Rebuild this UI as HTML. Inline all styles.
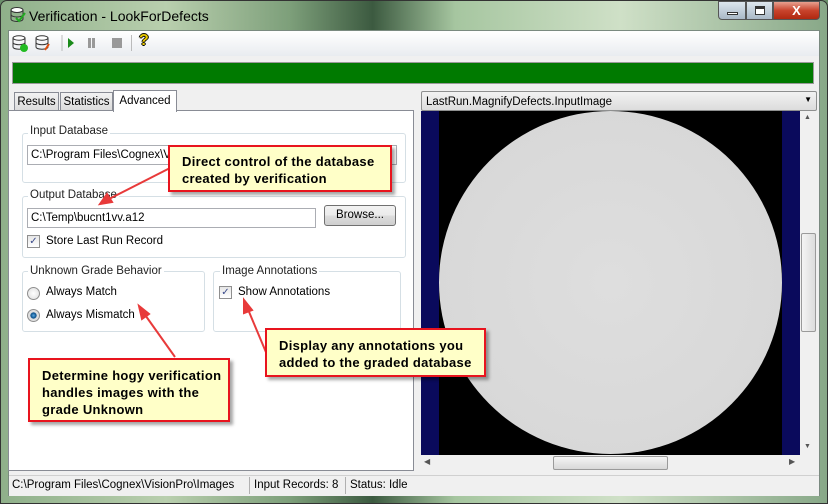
<!DOCTYPE html>
<html><head><meta charset="utf-8"><style>
*{box-sizing:border-box;margin:0;padding:0}
body{width:828px;height:504px;overflow:hidden;font-family:"Liberation Sans",sans-serif;font-size:11.5px;color:#000;position:relative;background:#6a8f6a}
.a{position:absolute}
.frame{left:0;top:0;width:828px;height:504px;background:linear-gradient(90deg,#8fb08a 0%,#b9cfae 20%,#7d9f7a 35%,#3c5a40 45%,#a6c6a0 55%,#cfe0c7 75%,#88a888 100%);border-radius:7px 7px 0 0;border:1px solid #333}
.client{left:8px;top:30px;width:812px;height:466px;background:#f0f0f0;border:1px solid #7a8a80}
.grp{border:1px solid #d5dfe5;border-radius:3px}
.lbl{background:#fff;padding:0 2px;color:#222}
.tb{background:#fff;border:1px solid #abadb3;height:20px;padding:3px 3px;color:#000}
.btn{border:1px solid #707070;border-radius:3px;background:linear-gradient(#f2f2f2,#ebebeb 50%,#dddddd 51%,#cfcfcf);text-align:center;line-height:19px}
.call{background:#ffffc8;border:2px solid #e8141e;box-shadow:3px 3px 3px rgba(0,0,0,.35);font-weight:bold;font-size:13px;line-height:17px;letter-spacing:.3px;color:#000}
.cb{width:13px;height:13px;border:1px solid #8f8f8f;background:linear-gradient(#e6e6e6,#fff);font-size:10px;line-height:11px;text-align:center;color:#3a4a8a}
</style></head><body>
<div class="a frame"></div>
<svg class="a" style="left:10px;top:6px" width="16" height="18" viewBox="0 0 16 18"><ellipse cx="7" cy="4" rx="6" ry="2.5" fill="#fff" stroke="#333"/><path d="M1 4v9c0 1.5 3 2.5 6 2.5s6-1 6-2.5V4M1 8.5c0 1.5 3 2.5 6 2.5s6-1 6-2.5" fill="none" stroke="#333"/><path d="M6 12l3 3 6-8" fill="none" stroke="#2a2" stroke-width="2"/></svg>
<div class="a" style="left:29px;top:8px;font-size:14px;color:#000">Verification - LookForDefects</div>
<div class="a" style="left:718px;top:1px;width:28px;height:19px;border:1px solid #555;border-radius:0 0 0 4px;background:linear-gradient(#dde6ee,#a9b8c6)"><div class="a" style="left:8px;top:10px;width:11px;height:3px;background:#fff;border:1px solid #333"></div></div>
<div class="a" style="left:746px;top:1px;width:27px;height:19px;border:1px solid #555;background:linear-gradient(#dde6ee,#a9b8c6)"><div class="a" style="left:8px;top:4px;width:10px;height:9px;border:1px solid #333;border-top-width:3px;background:#fff"></div></div>
<div class="a" style="left:773px;top:1px;width:47px;height:19px;border:1px solid #555;border-radius:0 0 4px 0;background:linear-gradient(#e8a090,#c8432c 50%,#b02810);color:#fff;font-weight:bold;text-align:center;font-size:13px;line-height:17px">X</div>
<div class="a client"></div>
<div class="a" style="left:9px;top:31px;width:810px;height:25px;background:linear-gradient(#fff,#e9ecf0)"></div>
<svg class="a" style="left:12px;top:35px" width="80" height="18" viewBox="0 0 80 18"><g fill="none" stroke="#333"><ellipse cx="7" cy="3" rx="6" ry="2.2" fill="#fff"/><path d="M1 3v9c0 1.5 3 2.2 6 2.2s6-.7 6-2.2V3M1 7.5c0 1.4 3 2.2 6 2.2s6-.8 6-2.2"/><ellipse cx="30" cy="3" rx="6" ry="2.2" fill="#fff"/><path d="M24 3v9c0 1.5 3 2.2 6 2.2s6-.7 6-2.2V3M24 7.5c0 1.4 3 2.2 6 2.2s6-.8 6-2.2"/></g><circle cx="12" cy="13" r="4" fill="#2b2"/><path d="M33 15l4-6" stroke="#e05010" stroke-width="2"/><line x1="50" y1="0" x2="50" y2="16" stroke="#bbb"/><path d="M56 3l6 5-6 5z" fill="#1a8a1a"/><rect x="76" y="3" width="3" height="10" fill="#999"/></svg>
<div class="a" style="left:92px;top:38px;width:3px;height:10px;background:#999"></div>
<div class="a" style="left:112px;top:38px;width:10px;height:10px;background:#999"></div>
<div class="a" style="left:131px;top:35px;width:1px;height:16px;background:#bbb"></div>
<div class="a" style="left:139px;top:32px;font-weight:bold;font-size:16px;color:#e8c800;text-shadow:1px 0 #000,-1px 0 #000,0 1px #000,0 -1px #000">?</div>
<div class="a" style="left:12px;top:62px;width:802px;height:22px;background:#007a00;border:1px solid #9a9a9a"></div>
<div class="a" style="left:14px;top:92px;width:45px;height:19px;background:linear-gradient(#f2f2f2,#dcdcdc);border:1px solid #898c95;text-align:center;line-height:18px">Results</div>
<div class="a" style="left:60px;top:92px;width:53px;height:19px;background:linear-gradient(#f2f2f2,#dcdcdc);border:1px solid #898c95;text-align:center;line-height:18px">Statistics</div>
<div class="a" style="left:8px;top:110px;width:406px;height:361px;background:#fff;border:1px solid #898c95"></div>
<div class="a" style="left:113px;top:90px;width:64px;height:22px;background:#fff;border:1px solid #898c95;border-bottom:none;text-align:center;line-height:20px">Advanced</div>
<div class="a grp" style="left:22px;top:133px;width:384px;height:50px"></div>
<div class="a lbl" style="left:28px;top:125px">Input Database</div>
<div class="a tb" style="left:27px;top:145px;width:370px">C:\Program Files\Cognex\VisionPro\Images</div>
<div class="a grp" style="left:22px;top:196px;width:384px;height:62px"></div>
<div class="a lbl" style="left:28px;top:189px">Output Database</div>
<div class="a tb" style="left:27px;top:208px;width:289px">C:\Temp\bucnt1vv.a12</div>
<div class="a btn" style="left:324px;top:205px;width:72px;height:21px">Browse...</div>
<div class="a cb" style="left:27px;top:235px">✓</div>
<div class="a" style="left:46px;top:235px">Store Last Run Record</div>
<div class="a grp" style="left:22px;top:271px;width:183px;height:61px"></div>
<div class="a lbl" style="left:28px;top:265px">Unknown Grade Behavior</div>
<div class="a" style="left:27px;top:287px;width:13px;height:13px;border-radius:50%;border:1px solid #8f8f8f;background:radial-gradient(#fff,#ddd)"></div>
<div class="a" style="left:46px;top:286px">Always Match</div>
<div class="a" style="left:27px;top:309px;width:13px;height:13px;border-radius:50%;border:1px solid #8f8f8f;background:radial-gradient(#5aa8e0 0,#0a4f8a 35%,#e0e0e0 45%)"></div>
<div class="a" style="left:46px;top:309px">Always Mismatch</div>
<div class="a grp" style="left:213px;top:271px;width:188px;height:61px"></div>
<div class="a lbl" style="left:220px;top:265px">Image Annotations</div>
<div class="a cb" style="left:219px;top:286px">✓</div>
<div class="a" style="left:238px;top:286px">Show Annotations</div>
<div class="a" style="left:421px;top:91px;width:396px;height:20px;border:1px solid #8e8f8f;border-radius:2px;background:linear-gradient(#f2f2f2,#dcdcdc);padding:3px 4px;line-height:14px">LastRun.MagnifyDefects.InputImage<span style="position:absolute;right:4px;top:1px;font-size:8px">▼</span></div>
<div class="a" style="left:421px;top:111px;width:379px;height:344px;background:#0a0a5c"></div>
<div class="a" style="left:439px;top:111px;width:343px;height:344px;background:#000"></div>
<div class="a" style="left:439px;top:111px;width:343px;height:343px;border-radius:50%;background:radial-gradient(#dedede,#d6d6d6)"></div>
<div class="a" style="left:800px;top:111px;width:17px;height:344px;background:#f0f0f0"></div>
<div class="a" style="left:804px;top:114px;font-size:7px;color:#555">▲</div>
<div class="a" style="left:804px;top:443px;font-size:7px;color:#555">▼</div>
<div class="a" style="left:801px;top:233px;width:15px;height:99px;border:1px solid #9a9a9a;border-radius:2px;background:linear-gradient(90deg,#f4f4f4,#dcdcdc)"></div>
<div class="a" style="left:421px;top:455px;width:379px;height:16px;background:#f0f0f0"></div>
<div class="a" style="left:424px;top:457px;font-size:8px;color:#555">◀</div>
<div class="a" style="left:789px;top:457px;font-size:8px;color:#555">▶</div>
<div class="a" style="left:553px;top:456px;width:115px;height:14px;border:1px solid #9a9a9a;border-radius:2px;background:linear-gradient(#f4f4f4,#d8d8d8)"></div>
<div class="a" style="left:9px;top:475px;width:810px;height:21px;background:#f0f0f0;border-top:1px solid #d0d0d0"></div>
<div class="a" style="left:12px;top:479px">C:\Program Files\Cognex\VisionPro\Images</div>
<div class="a" style="left:249px;top:477px;width:1px;height:17px;background:#b0b0b0"></div>
<div class="a" style="left:254px;top:479px">Input Records: 8</div>
<div class="a" style="left:345px;top:477px;width:1px;height:17px;background:#b0b0b0"></div>
<div class="a" style="left:350px;top:479px">Status: Idle</div>
<svg class="a" style="left:0;top:0" width="828" height="504"><g stroke="#e83a3a" stroke-width="2" fill="#e83a3a"><line x1="170" y1="168" x2="105" y2="201"/><path d="M100 204l12-2-5-8z"/><line x1="175" y1="357" x2="143" y2="312"/><path d="M139 306l3 13 7-5z"/><line x1="268" y1="357" x2="247" y2="307"/><path d="M244 300l0 13 8-3z"/></g></svg>
<div class="a call" style="left:168px;top:145px;width:224px;height:47px;padding:6px 0 0 12px">Direct control of the database<br>created by verification</div>
<div class="a call" style="left:28px;top:358px;width:202px;height:64px;padding:7px 0 0 12px">Determine hogy verification<br>handles images with the<br>grade Unknown</div>
<div class="a call" style="left:265px;top:328px;width:221px;height:49px;padding:7px 0 0 12px">Display any annotations you<br>added to the graded database</div>
</body></html>
